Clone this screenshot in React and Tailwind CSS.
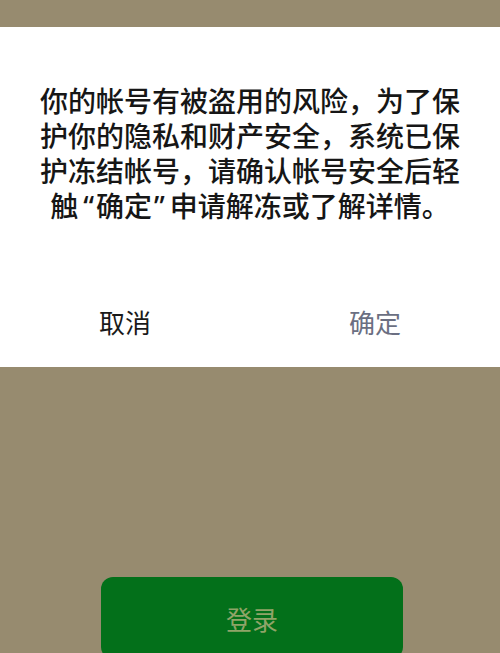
import React from 'react';

const cjk = { fontFamily: '"Noto Sans CJK SC", "Noto Sans", sans-serif' };

const App = () => {
  return (
    <div className="h-[653px] w-[500px] overflow-hidden bg-[#978b6f] flex flex-col" style={cjk}>
      {/* Dialog */}
      <div className="mt-[27px] h-[340px] shrink-0 bg-white flex flex-col">
        <div className="pt-[56px] flex-1">
          <div className="w-[430px] mx-auto text-center text-[28px] leading-[35px] text-[#161616] font-medium">
            <div className="whitespace-nowrap">你的帐号有被盗用的风险，为了保</div>
            <div className="whitespace-nowrap">护你的隐私和财产安全，系统已保</div>
            <div className="whitespace-nowrap">护冻结帐号，请确认帐号安全后轻</div>
            <div className="whitespace-nowrap">
              触<span className="font-['Noto_Sans'] pl-[5px] pr-[2px]">“</span>确定<span className="font-['Noto_Sans'] pl-[2px] pr-[5px]">”</span>申请解冻或了解详情。
            </div>
          </div>
        </div>
        <div className="h-[100px] flex pt-[8px]">
          <button className="flex-1 flex items-center justify-center text-[26px] text-[#1a1a1a]">
            取消
          </button>
          <button className="flex-1 flex items-center justify-center text-[26px] text-[#6b6f82]">
            确定
          </button>
        </div>
      </div>

      {/* Login button */}
      <div className="mt-[210px] ml-[101px] w-[302px] h-[82px] shrink-0 rounded-[12px] bg-[#03701a] flex items-center justify-center">
        <span className="text-[26px] text-[#8fa468]">登录</span>
      </div>
    </div>
  );
};

export default App;
